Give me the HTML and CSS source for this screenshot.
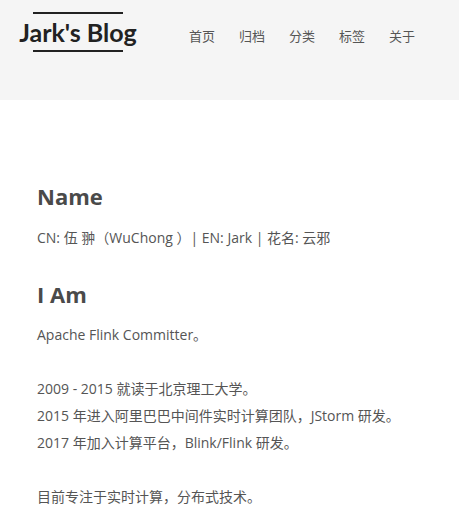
FILE: index.html
```html
<!DOCTYPE html>
<html lang="zh">
<head>
<meta charset="utf-8">
<title>Jark's Blog</title>
<link rel="stylesheet" href="styles.css">
</head>
<body>
<header class="header">
  <div class="logo"><span class="logo-text">Jark's Blog</span></div>
  <nav class="nav">
    <a href="#">首页</a>
    <a href="#">归档</a>
    <a href="#">分类</a>
    <a href="#">标签</a>
    <a href="#">关于</a>
  </nav>
</header>
<main class="content">
  <h2 class="title first">Name</h2>
  <p>CN: 伍 翀（WuChong ）| EN: Jark | 花名: 云邪</p>
  <h2 class="title">I Am</h2>
  <p>Apache Flink Committer。</p>
  <p>2009 - 2015 就读于北京理工大学。<br>2015 年进入阿里巴巴中间件实时计算团队，JStorm 研发。<br>2017 年加入计算平台，Blink/Flink 研发。</p>
  <p class="last">目前专注于实时计算，分布式技术。</p>
</main>
</body>
</html>
```

FILE: styles.css
```css
html, body {
  margin: 0;
  padding: 0;
  background: #fff;
}
body {
  font-family: "Open Sans", "Noto Sans CJK SC", sans-serif;
  color: #555;
}
.header {
  height: 100px;
  background: #f5f5f5;
  display: flex;
  align-items: flex-start;
}
.logo {
  width: 156px;
  display: flex;
  flex-direction: column;
  align-items: center;
  padding-top: 12px;
}
.logo::before,
.logo::after {
  content: "";
  display: block;
  width: 90px;
  height: 2px;
  background: #222;
}
.logo-text {
  display: block;
  font-family: "Lato", sans-serif;
  font-weight: 700;
  font-size: 25px;
  line-height: 36px;
  color: #222;
}
.nav {
  display: flex;
  gap: 24px;
  padding-top: 27px;
  padding-left: 33px;
}
.nav a {
  font-size: 13px;
  line-height: 18px;
  color: #555;
  text-decoration: none;
}
.content {
  padding: 80px 37px 0;
}
.title {
  margin: 12px 0 11px;
  font-size: 22px;
  font-weight: 700;
  line-height: 32px;
  color: #4a4a4a;
}
.title.first {
  margin-top: 0;
  margin-bottom: 12px;
}
.content p {
  margin: 0 0 27px;
  font-size: 14px;
  line-height: 27px;
}
.content p.last {
  margin-bottom: 0;
}
```
